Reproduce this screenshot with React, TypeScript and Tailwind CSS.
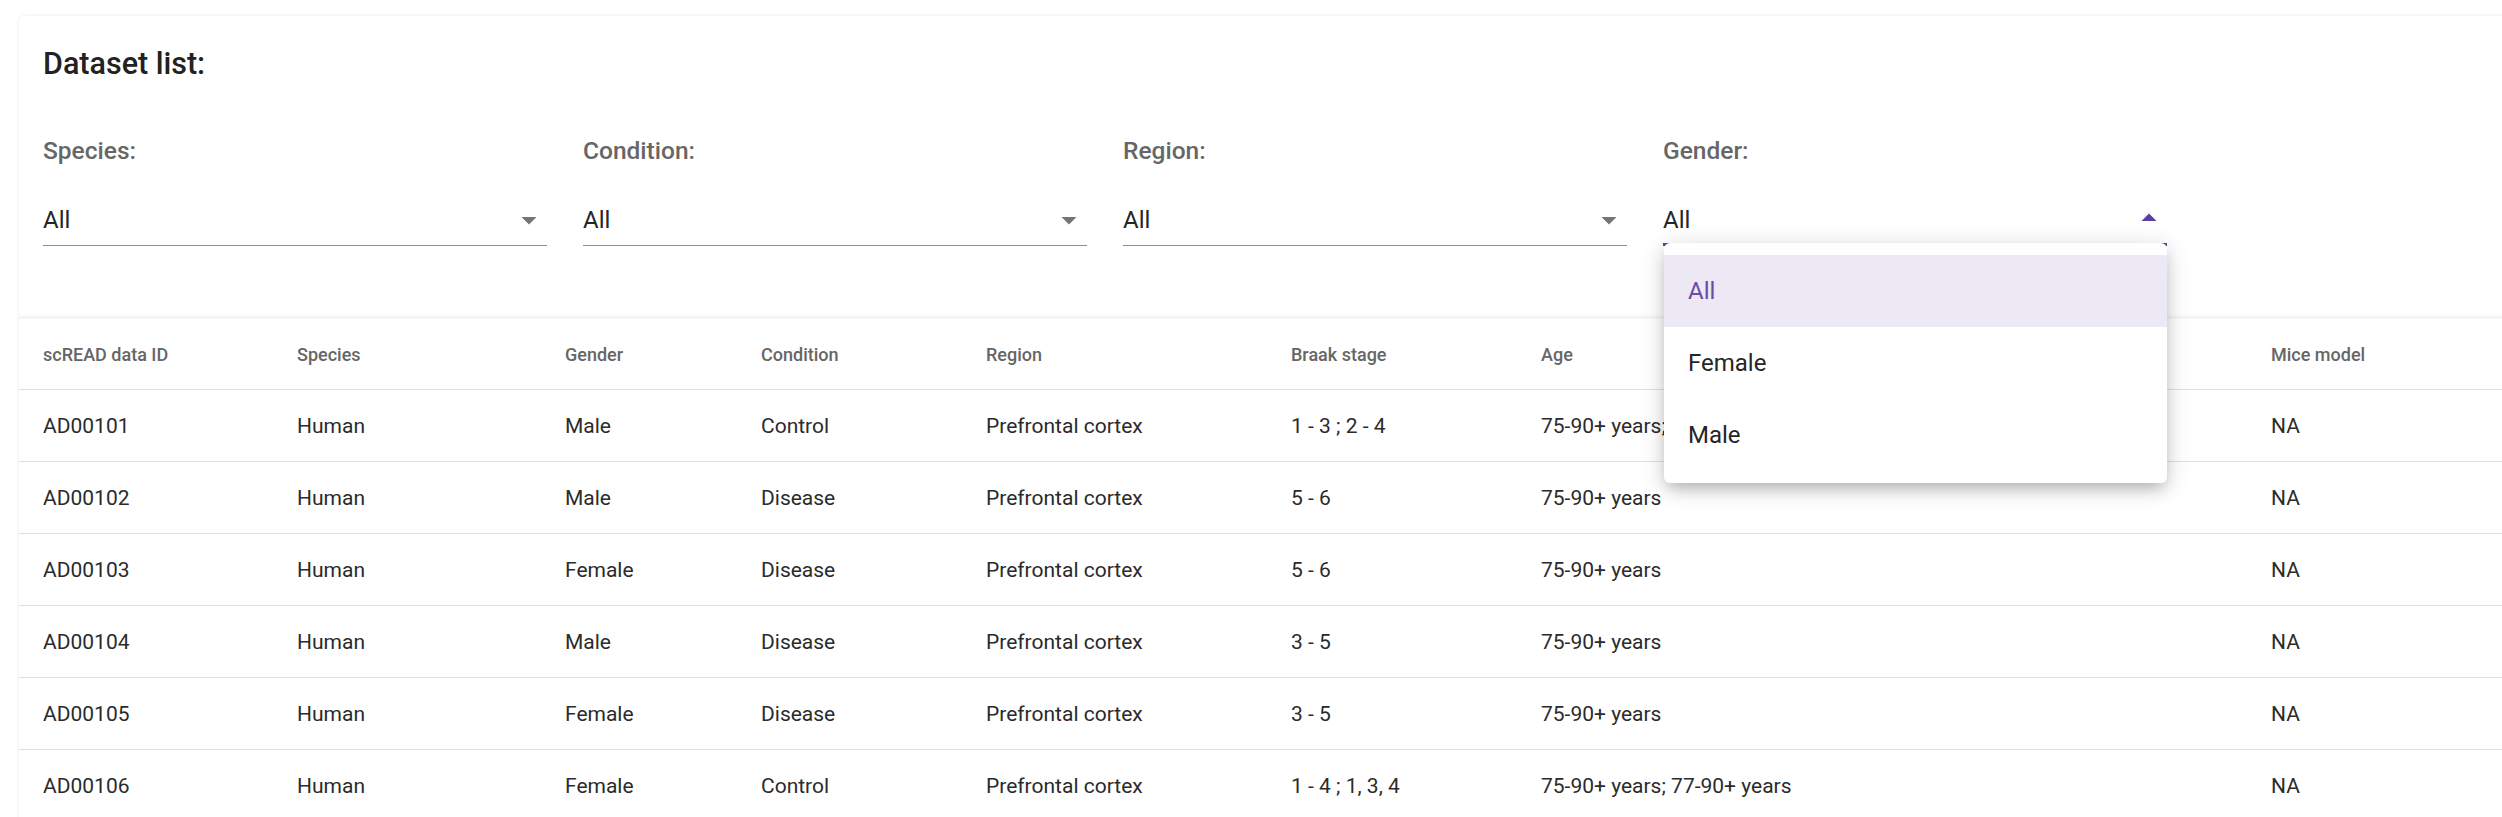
import React from "react";

const columns = [
  "scREAD data ID",
  "Species",
  "Gender",
  "Condition",
  "Region",
  "Braak stage",
  "Age",
  "Mice model",
];

const rows: string[][] = [
  ["AD00101", "Human", "Male", "Control", "Prefrontal cortex", "1 - 3 ; 2 - 4", "75-90+ years; 77-90+ years", "NA"],
  ["AD00102", "Human", "Male", "Disease", "Prefrontal cortex", "5 - 6", "75-90+ years", "NA"],
  ["AD00103", "Human", "Female", "Disease", "Prefrontal cortex", "5 - 6", "75-90+ years", "NA"],
  ["AD00104", "Human", "Male", "Disease", "Prefrontal cortex", "3 - 5", "75-90+ years", "NA"],
  ["AD00105", "Human", "Female", "Disease", "Prefrontal cortex", "3 - 5", "75-90+ years", "NA"],
  ["AD00106", "Human", "Female", "Control", "Prefrontal cortex", "1 - 4 ; 1, 3, 4", "75-90+ years; 77-90+ years", "NA"],
];

const gridCols =
  "grid grid-cols-[254px_268px_196px_225px_305px_250px_730px_400px]";

function Arrow({ up = false }: { up?: boolean }) {
  return (
    <svg
      viewBox="0 0 24 24"
      className={
        up
          ? "absolute right-0 top-[3px] h-[36px] w-[36px] rotate-180 fill-[#5e3ea1]"
          : "absolute right-0 top-[5px] h-[36px] w-[36px] fill-[#757575]"
      }
    >
      <path d="M7 10l5 5 5-5z" />
    </svg>
  );
}

function Filter({ label, open = false }: { label: string; open?: boolean }) {
  return (
    <div className="relative">
      <div className="text-[24.5px] leading-[36px] font-medium text-[#666666]">{label}</div>
      <div
        className={
          open
            ? "relative mt-[28px] pt-[6px] pb-[5px] leading-[35px] text-[24px] text-[#262626] border-b-[3px] border-[#5e3ea1]"
            : "relative mt-[28px] pt-[6px] pb-[7px] leading-[35px] text-[24px] text-[#262626] border-b border-[#8f8f8f]"
        }
      >
        All
        <Arrow up={open} />
      </div>
      {open && (
        <div className="absolute left-[1px] top-[110px] z-10 w-[503px] rounded-[6px] bg-white py-[12px] shadow-[0_8px_16px_-4px_rgba(0,0,0,0.25),0_4px_24px_2px_rgba(0,0,0,0.12)]">
          <div className="flex h-[72px] items-center bg-[#ece8f4] px-[24px] text-[24px] text-[#6b4aa8]">All</div>
          <div className="flex h-[72px] items-center px-[24px] text-[24px] text-[#262626]">Female</div>
          <div className="flex h-[72px] items-center px-[24px] text-[24px] text-[#262626]">Male</div>
        </div>
      )}
    </div>
  );
}

export default function App() {
  return (
    <div className="h-screen w-screen overflow-hidden bg-white font-[family-name:Roboto,sans-serif]">
      <div className="pl-[19px] pt-[16px]">
        <div className="w-[2600px] rounded-t-[6px] bg-white px-[24px] pt-[24px] pb-[71px] shadow-[0_0_4px_rgba(0,0,0,0.09)]">
          <div className="text-[30.5px] leading-[48px] font-medium text-[#222222]">Dataset list:</div>
          <div className="mt-[45px] grid w-[2124px] grid-cols-4 gap-x-[36px]">
            <Filter label="Species:" />
            <Filter label="Condition:" />
            <Filter label="Region:" />
            <Filter label="Gender:" open />
          </div>
        </div>
        <div className="relative w-[2600px] border-t-2 border-[#f4f4f4] bg-white shadow-[0_0_4px_rgba(0,0,0,0.09)]">
          <div className={`${gridCols} h-[71px] items-center border-b border-[#e0e0e0]`}>
            {columns.map((c) => (
              <div key={c} className="pl-[24px] text-[18px] font-medium text-[#666666]">
                {c}
              </div>
            ))}
          </div>
          {rows.map((r) => (
            <div key={r[0]} className={`${gridCols} h-[72px] items-center border-b border-[#e0e0e0] pt-[2px]`}>
              {r.map((v, i) => (
                <div key={i} className="pl-[24px] text-[21px] text-[#2b2b2b]">
                  {v}
                </div>
              ))}
            </div>
          ))}
          <div className="h-[72px]" />
        </div>
      </div>
    </div>
  );
}
